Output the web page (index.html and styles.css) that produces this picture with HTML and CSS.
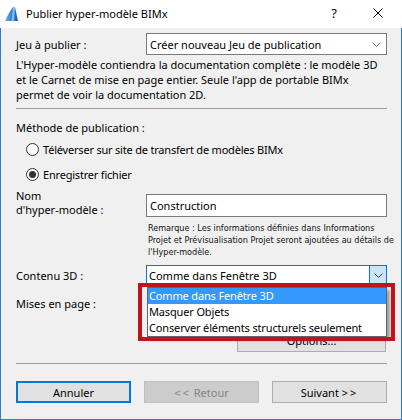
FILE: index.html
```html
<!DOCTYPE html>
<html lang="fr">
<head>
<meta charset="utf-8">
<title>Publier hyper-modèle BIMx</title>
<link rel="stylesheet" href="styles.css">
</head>
<body>
<div class="win">
  <div class="titlebar">
    <svg class="appicon" width="16" height="16" viewBox="0 0 16 16">
      <defs>
        <linearGradient id="g" x1="0" y1="0" x2="1" y2="0">
          <stop offset="0" stop-color="#7fb4ea"/>
          <stop offset="0.5" stop-color="#2f7fd6"/>
          <stop offset="1" stop-color="#1b5fb8"/>
        </linearGradient>
      </defs>
      <path d="M1 15 C3 10 6 5 9 1 L11 1 L14 15 Z" fill="url(#g)"/>
      <path d="M9 1 L11 1 L10 15 L7.5 15 Z" fill="#bcd8f5" opacity="0.7"/>
    </svg>
    <span class="title">Publier hyper-modèle BIMx</span>
    <span class="help">?</span>
    <svg class="close" width="10" height="10" viewBox="0 0 10 10">
      <path d="M0.5 0.5 L9.5 9.5 M9.5 0.5 L0.5 9.5" stroke="#000" stroke-width="1" fill="none"/>
    </svg>
  </div>
  <div class="content">
    <div class="row row-jeu">
      <span class="label">Jeu à publier :</span>
      <div class="select">
        <span class="select-text">Créer nouveau Jeu de publication</span>
        <svg class="chev" width="9" height="5" viewBox="0 0 9 5"><path d="M0.5 0.5 L4.5 4.5 L8.5 0.5" stroke="#6b6b6b" fill="none"/></svg>
      </div>
    </div>
    <p class="desc">L'Hyper-modèle contiendra la documentation complète : le modèle 3D<br>et le Carnet de mise en page entier. Seule l'app de portable BIMx<br>permet de voir la documentation 2D.</p>
    <div class="sep sep-top"></div>
    <div class="method">Méthode de publication :</div>
    <div class="radio-row"><span class="radio"></span><span class="radio-text">Téléverser sur site de transfert de modèles BIMx</span></div>
    <div class="radio-row"><span class="radio checked"></span><span class="radio-text">Enregistrer fichier</span></div>
    <div class="row row-nom">
      <span class="label label-two">Nom<br>d'hyper-modèle :</span>
      <div class="input">Construction</div>
    </div>
    <p class="remark">Remarque : Les informations définies dans Informations<br>Projet et Prévisualisation Projet seront ajoutées au détails de<br>l'Hyper-modèle.</p>
    <div class="row row-contenu">
      <span class="label">Contenu 3D :</span>
      <div class="select focus">
        <span class="select-text">Comme dans Fenêtre 3D</span>
        <span class="drop-btn"><svg class="chev" width="9" height="5" viewBox="0 0 9 5"><path d="M0.5 0.5 L4.5 4.5 L8.5 0.5" stroke="#404040" fill="none"/></svg></span>
        <ul class="listbox">
          <li class="sel">Comme dans Fenêtre 3D</li>
          <li>Masquer Objets</li>
          <li>Conserver éléments structurels seulement</li>
        </ul>
        <div class="highlight"></div>
      </div>
    </div>
    <div class="row row-mises">
      <span class="label">Mises en page :</span>
    </div>
    <div class="options-row"><button class="btn btn-options">Options...</button></div>
    <div class="sep sep-bottom"></div>
    <div class="buttons">
      <button class="btn btn-default">Annuler</button>
      <button class="btn btn-disabled"><span class="arrows">&lt;&lt;</span> Retour</button>
      <button class="btn">Suivant <span class="arrows">&gt;&gt;</span></button>
    </div>
  </div>
</div>
</body>
</html>
```

FILE: styles.css
```css
* { box-sizing: border-box; }
html, body { margin: 0; padding: 0; }
body {
  width: 402px;
  height: 420px;
  overflow: hidden;
  font-family: "Noto Sans", "DejaVu Sans", sans-serif;
  font-size: 11px;
  color: #000;
}
.win {
  width: 402px;
  height: 420px;
  background: #f0f0f0;
  border: 1px solid #2b7bd3;
  border-top: none;
  display: flex;
  flex-direction: column;
}
.titlebar {
  height: 28px;
  background: #fff;
  display: flex;
  align-items: center;
  margin: 0 -1px;
  padding-left: 4px;
}
.appicon { margin-right: 6px; margin-top: -1px; }
.title { flex: 1; font-size: 11px; margin-top: -2px; }
.help { font-size: 13px; margin-right: 36px; margin-top: -2px; }
.close { margin-right: 19px; margin-top: -2px; }

.content {
  padding: 0 14px 0 15px;
  display: flex;
  flex-direction: column;
}
.row {
  display: grid;
  grid-template-columns: 130px 1fr;
}
.label { align-self: center; }
.row-jeu { margin-top: 5px; }
.select {
  position: relative;
  height: 22px;
  background: #fff;
  border: 1px solid #7a7a7a;
  display: flex;
  align-items: center;
  padding-left: 3px;
}
.select-text { flex: 1; white-space: nowrap; }
.select .chev { margin-right: 5px; }
.desc {
  margin: 2px 0 0;
  line-height: 15px;
  white-space: nowrap;
}
.sep { height: 1px; background: #a0a0a0; }
.sep-top { margin-top: 6px; }
.method { margin-top: 11px; line-height: 15px; }
.radio-row {
  height: 25px;
  display: flex;
  align-items: center;
  padding-left: 10px;
}
.radio-text { letter-spacing: -0.2px; }
.method + .radio-row { margin-top: 2px; }
.radio {
  width: 13px;
  height: 13px;
  border: 1px solid #333;
  border-radius: 50%;
  background: #fff;
  margin-right: 4px;
  display: flex;
  align-items: center;
  justify-content: center;
}
.radio.checked::after {
  content: "";
  width: 7px;
  height: 7px;
  border-radius: 50%;
  background: #333;
}
.row-nom { align-items: start; }
.label-two { align-self: start; padding-top: 2px; line-height: 14px; }
.input {
  margin-top: 7px;
  height: 23px;
  background: #fff;
  border: 1px solid #7a7a7a;
  padding-left: 3px;
  display: flex;
  align-items: center;
}
.remark {
  margin: 5px 0 0;
  padding-left: 132px;
  font-family: "DejaVu Sans Condensed", "Liberation Sans", sans-serif;
  font-size: 9px;
  line-height: 12px;
  color: #111;
  white-space: nowrap;
}
.row-contenu { margin-top: 7px; }
.select.focus {
  height: 20px;
  border-color: #0078d7;
  padding-left: 2px;
}
.drop-btn {
  align-self: stretch;
  width: 17px;
  background: #cce4f7;
  border-left: 1px solid #0078d7;
  display: flex;
  align-items: center;
  justify-content: center;
}
.drop-btn .chev { margin: 0; }
.listbox {
  position: absolute;
  left: 0;
  top: 21px;
  width: 240px;
  margin: 0;
  padding: 0;
  list-style: none;
  background: #fff;
  border: 1px solid #646464;
  box-shadow: 3px 3px 3px rgba(0,0,0,0.35);
  z-index: 2;
}
.listbox li {
  height: 16px;
  line-height: 16px;
  padding-left: 1px;
  white-space: nowrap;
  letter-spacing: -0.15px;
}
.listbox li.sel { background: #3399ff; color: #fff; }
.highlight {
  position: absolute;
  left: -9px;
  top: 17px;
  width: 257px;
  height: 58px;
  border: 4px solid #c0141c;
  z-index: 3;
}
.row-mises { margin-top: 11px; line-height: 15px; }
.options-row { display: flex; justify-content: flex-end; margin-top: 18px; padding-right: 1px; }
.btn {
  font-family: inherit;
  font-size: 11px;
  height: 22px;
  width: 115px;
  background: #e1e1e1;
  border: 1px solid #adadad;
  color: #000;
  padding: 0;
  margin: 0;
}
.arrows { letter-spacing: 2px; }
.btn-options { width: 149px; height: 23px; }
.sep-bottom { margin-top: 11px; }
.buttons {
  margin-top: 17px;
  display: flex;
  justify-content: space-between;
}
.btn-default { border: 2px solid #0078d7; }
.btn-disabled { background: #cccccc; border-color: #bfbfbf; color: #838383; }
```
